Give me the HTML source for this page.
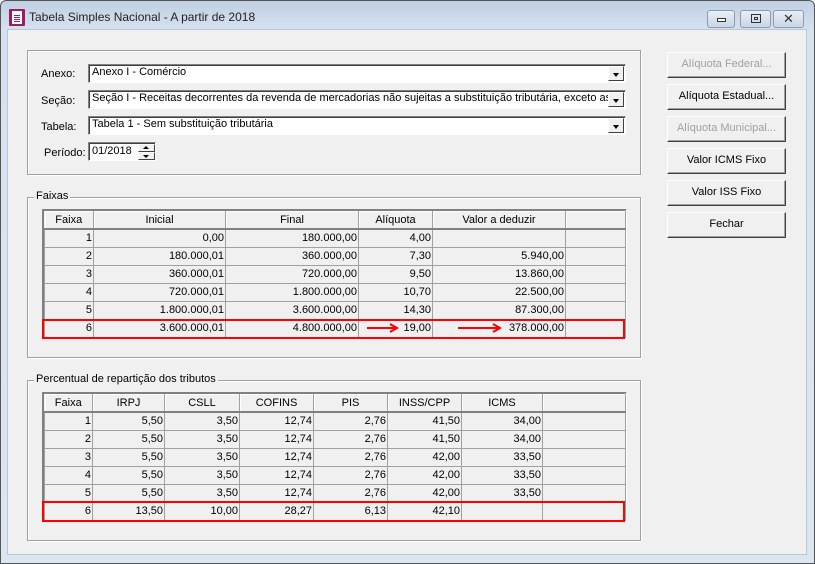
<!DOCTYPE html>
<html><head><meta charset="utf-8">
<style>
*{box-sizing:border-box;margin:0;padding:0}
body{width:815px;height:564px;overflow:hidden;background:#fff;font-family:"Liberation Sans",Arial,sans-serif;font-size:11px;color:#000;position:relative}
.abs{position:absolute}
#win{left:0;top:0;width:815px;height:564px;background:linear-gradient(#c0d0e2 0,#d6e2ef 30px,#dbe6f1 100%);border:1px solid #555;border-radius:6px 6px 0 0}
#client{left:7px;top:29px;width:800px;height:526px;background:#f0f0f0;border:1px solid #b9c7d6}
.title{left:29px;top:10px;font-size:12px;color:#222}
.icon{left:9px;top:9px;width:16px;height:17px;background:#9b1b68;border-radius:1px}
.icon i{position:absolute;left:3px;top:2px;width:10px;height:13px;background:#fff}
.icon b{position:absolute;left:5px;width:6px;height:1px;background:#9b1b68}
.cb{top:10px;height:18px;border:1px solid #8b9bb0;border-radius:3px;background:linear-gradient(#e8eef5,#c9d6e4)}
.group{border:1px solid #a0a0a0;box-shadow:1px 1px 0 #fff inset,1px 1px 0 #fff}
.glabel{background:#f0f0f0;padding:0 2px}
.lbl{font-size:11px}
.combo{height:19px;background:#fff;border:1px solid;border-color:#808080 #fff #fff #808080;box-shadow:inset 1px 1px 0 #404040;padding:1px 3px;white-space:nowrap;overflow:hidden}
.dd{position:absolute;right:1px;top:1px;width:16px;height:15px;background:#f0f0f0;border:1px solid;border-color:#fff #404040 #404040 #fff}
.dd:after{content:"";position:absolute;left:4px;top:6px;border-left:3.5px solid transparent;border-right:3.5px solid transparent;border-top:4px solid #000}
.btn{left:667px;width:119px;height:26px;background:#f0f0f0;border:1px solid;border-color:#fff #404040 #404040 #fff;box-shadow:inset -1px -1px 0 #a0a0a0;text-align:center;line-height:23px;font-size:11px}
.dis{color:#a0a0a0}
table{border-collapse:collapse;table-layout:fixed;position:absolute;font-size:11px}
td{border:1px solid #a0a0a0;height:18px;padding:0 1px;text-align:right;white-space:nowrap;overflow:hidden}
th{font-weight:normal;height:18px;border-right:1px solid #a0a0a0;border-bottom:2px solid #808080;text-align:center;background:#f0f0f0;box-shadow:inset 1px 1px 0 #fff}
.tb{border:2px solid;border-color:#808080 #fff #fff #808080;background:#f0f0f0}
.red{border:2px solid #f00;position:absolute}
</style></head><body>
<div id="win" class="abs"></div>
<div class="abs icon"><i></i><b style="top:6px"></b><b style="top:8px"></b><b style="top:10px"></b><b style="top:12px"></b></div>
<div class="abs title">Tabela Simples Nacional - A partir de 2018</div>
<div class="abs cb" style="left:707px;width:28px"><div class="abs" style="left:9px;top:7px;width:9px;height:4px;border:1px solid #333;background:#fff"></div></div>
<div class="abs cb" style="left:740px;width:31px"><div class="abs" style="left:10px;top:3px;width:10px;height:9px;border:1px solid #333"><div class="abs" style="left:2px;top:2px;width:4px;height:3px;border:1px solid #333"></div></div></div>
<div class="abs cb" style="left:773px;width:31px;text-align:center;line-height:15px;font-size:13px;color:#333">✕</div>
<div id="client" class="abs"></div>

<div class="abs group" style="left:27px;top:50px;width:614px;height:125px"></div>
<div class="abs lbl" style="left:41px;top:68px">Anexo:</div>
<div class="abs lbl" style="left:41px;top:95px">Seção:</div>
<div class="abs lbl" style="left:41px;top:121px">Tabela:</div>
<div class="abs lbl" style="left:44px;top:147px">Período:</div>
<div class="abs combo" style="left:88px;top:64px;width:538px">Anexo I - Comércio<span class="dd"></span></div>
<div class="abs combo" style="left:88px;top:90px;width:538px">Seção I - Receitas decorrentes da revenda de mercadorias não sujeitas a substituição tributária, exceto as re<span class="dd"></span></div>
<div class="abs combo" style="left:88px;top:116px;width:538px">Tabela 1 - Sem substituição tributária<span class="dd"></span></div>
<div class="abs combo" style="left:88px;top:142px;width:68px;padding-top:2px">01/2018</div>
<div class="abs" style="left:138px;top:144px;width:17px;height:8px;border:1px solid;border-color:#fff #404040 #404040 #fff;background:#f0f0f0"><div class="abs" style="left:4px;top:1px;border-left:3px solid transparent;border-right:3px solid transparent;border-bottom:3px solid #000"></div></div>
<div class="abs" style="left:138px;top:152px;width:17px;height:8px;border:1px solid;border-color:#fff #404040 #404040 #fff;background:#f0f0f0"><div class="abs" style="left:4px;top:2px;border-left:3px solid transparent;border-right:3px solid transparent;border-top:3px solid #000"></div></div>

<div class="abs btn dis" style="top:52px">Alíquota Federal...</div>
<div class="abs btn" style="top:84px">Alíquota Estadual...</div>
<div class="abs btn dis" style="top:116px">Alíquota Municipal...</div>
<div class="abs btn" style="top:148px">Valor ICMS Fixo</div>
<div class="abs btn" style="top:180px">Valor ISS Fixo</div>
<div class="abs btn" style="top:212px">Fechar</div>

<div class="abs group" style="left:27px;top:197px;width:614px;height:161px"></div>
<div class="abs glabel" style="left:34px;top:190px">Faixas</div>
<div class="abs tb" style="left:42px;top:209px;width:585px;height:130px"></div>
<table style="left:44px;top:211px;width:581px">
<colgroup><col style="width:49px"><col style="width:132px"><col style="width:133px"><col style="width:74px"><col style="width:133px"><col style="width:60px"></colgroup>
<tr><th>Faixa</th><th>Inicial</th><th>Final</th><th>Alíquota</th><th>Valor a deduzir</th><th></th></tr>
<tr><td>1</td><td>0,00</td><td>180.000,00</td><td>4,00</td><td></td><td></td></tr>
<tr><td>2</td><td>180.000,01</td><td>360.000,00</td><td>7,30</td><td>5.940,00</td><td></td></tr>
<tr><td>3</td><td>360.000,01</td><td>720.000,00</td><td>9,50</td><td>13.860,00</td><td></td></tr>
<tr><td>4</td><td>720.000,01</td><td>1.800.000,00</td><td>10,70</td><td>22.500,00</td><td></td></tr>
<tr><td>5</td><td>1.800.000,01</td><td>3.600.000,00</td><td>14,30</td><td>87.300,00</td><td></td></tr>
<tr><td>6</td><td>3.600.000,01</td><td>4.800.000,00</td><td>19,00</td><td>378.000,00</td><td></td></tr>
</table>
<div class="red" style="left:42px;top:319px;width:583px;height:20px"></div>
<svg class="abs" style="left:366px;top:322px" width="140" height="12"><g stroke="#f00" stroke-width="2" fill="none"><path d="M1 6H30M24 2L31 6L24 10"/><path d="M92 6H133M127 2L134 6L127 10"/></g></svg>

<div class="abs group" style="left:27px;top:380px;width:614px;height:161px"></div>
<div class="abs glabel" style="left:34px;top:373px">Percentual de repartição dos tributos</div>
<div class="abs tb" style="left:42px;top:392px;width:585px;height:130px"></div>
<table style="left:44px;top:394px;width:581px">
<colgroup><col style="width:48px"><col style="width:72px"><col style="width:75px"><col style="width:74px"><col style="width:74px"><col style="width:74px"><col style="width:81px"><col style="width:83px"></colgroup>
<tr><th>Faixa</th><th>IRPJ</th><th>CSLL</th><th>COFINS</th><th>PIS</th><th>INSS/CPP</th><th>ICMS</th><th></th></tr>
<tr><td>1</td><td>5,50</td><td>3,50</td><td>12,74</td><td>2,76</td><td>41,50</td><td>34,00</td><td></td></tr>
<tr><td>2</td><td>5,50</td><td>3,50</td><td>12,74</td><td>2,76</td><td>41,50</td><td>34,00</td><td></td></tr>
<tr><td>3</td><td>5,50</td><td>3,50</td><td>12,74</td><td>2,76</td><td>42,00</td><td>33,50</td><td></td></tr>
<tr><td>4</td><td>5,50</td><td>3,50</td><td>12,74</td><td>2,76</td><td>42,00</td><td>33,50</td><td></td></tr>
<tr><td>5</td><td>5,50</td><td>3,50</td><td>12,74</td><td>2,76</td><td>42,00</td><td>33,50</td><td></td></tr>
<tr><td>6</td><td>13,50</td><td>10,00</td><td>28,27</td><td>6,13</td><td>42,10</td><td></td><td></td></tr>
</table>
<div class="red" style="left:42px;top:501px;width:583px;height:21px"></div>
</body></html>
